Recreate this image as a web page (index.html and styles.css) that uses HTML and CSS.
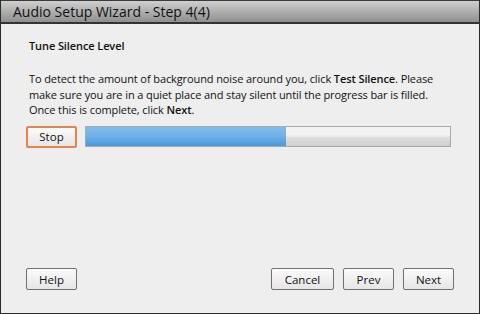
FILE: index.html
```html
<!DOCTYPE html>
<html lang="en">
<head>
  <meta charset="UTF-8">
  <title>Audio Setup Wizard</title>
  <link rel="stylesheet" href="styles.css">
</head>
<body>

  <div class="wizard">
    <div class="title-bar">Audio Setup Wizard - Step 4(4)</div>

    <div class="wizard-body">
      <h2 class="step-title">Tune Silence Level</h2>

      <p class="step-text">
        To detect the amount of background noise around you, click <b>Test Silence</b>. Please<br>
        make sure you are in a quiet place and stay silent until the progress bar is filled.<br>
        Once this is complete, click <b>Next</b>.
      </p>

      <!-- Stop button and progress -->
      <div class="test-row">
        <button class="btn btn-active">Stop</button>
        <div class="progress">
          <div class="progress-fill" style="width: 55%"></div>
        </div>
      </div>
    </div>

    <div class="wizard-footer">
      <button class="btn">Help</button>
      <div class="footer-right">
        <button class="btn btn-wide">Cancel</button>
        <button class="btn">Prev</button>
        <button class="btn">Next</button>
      </div>
    </div>
  </div>

</body>
</html>
```

FILE: styles.css
```css
/* Global */
body {
  margin: 0;
  padding: 0;
  font-family: 'Open Sans', sans-serif;
  background-color: #2a2a2a;
}

.wizard {
  width: 480px;
  height: 314px;
  box-sizing: border-box;
  border: 1px solid #2b2b2b;
  border-top: none;
  background-color: #eeeeee;
  display: flex;
  flex-direction: column;
}

/* Title bar */
.title-bar {
  height: 21px;
  border-top: 1px solid #3a3a3a;
  border-bottom: 2px solid #333;
  background: linear-gradient(#cfcfcf, #8f8f8f);
  padding-left: 12px;
  font-size: 14px;
  line-height: 21px;
  color: #111;
}

/* Body */
.wizard-body {
  flex: 1;
  padding: 14px 28px 0 28px;
}

.step-title {
  margin: 0 0 18px 0;
  font-size: 11px;
  letter-spacing: -0.1px;
  font-weight: 600;
  color: #111;
}

.step-text {
  margin: 0 0 8px 0;
  font-size: 11px;
  letter-spacing: -0.1px;
  line-height: 15.5px;
  white-space: nowrap;
  color: #111;
}

.step-text b {
  font-weight: 600;
}

.test-row {
  display: flex;
  align-items: center;
  gap: 8px;
  margin-left: -3px;
}

/* Buttons */
.btn {
  font-family: 'Open Sans', sans-serif;
  font-size: 11.5px;
  color: #111;
  height: 22px;
  width: 51px;
  padding: 0;
  border: 1px solid #707070;
  border-radius: 2px;
  background: linear-gradient(#fbfbfb, #e6e6e6);
}

.btn-wide {
  width: 63px;
}

.btn-active {
  border: 2px solid #e8824a;
}

/* Progress */
.progress {
  flex: 1;
  height: 19px;
  border: 1px solid #a9a9a9;
  background: linear-gradient(#f3f3f3, #f3f3f3 40%, #dcdcdc 60%, #d0d0d0);
}

.progress-fill {
  height: 100%;
  background: linear-gradient(#80bde9, #6fb1e6 50%, #4799dd);
}

/* Footer */
.wizard-footer {
  display: flex;
  justify-content: space-between;
  padding: 0 25px 23px 25px;
}

.footer-right {
  display: flex;
  gap: 9px;
}
```
